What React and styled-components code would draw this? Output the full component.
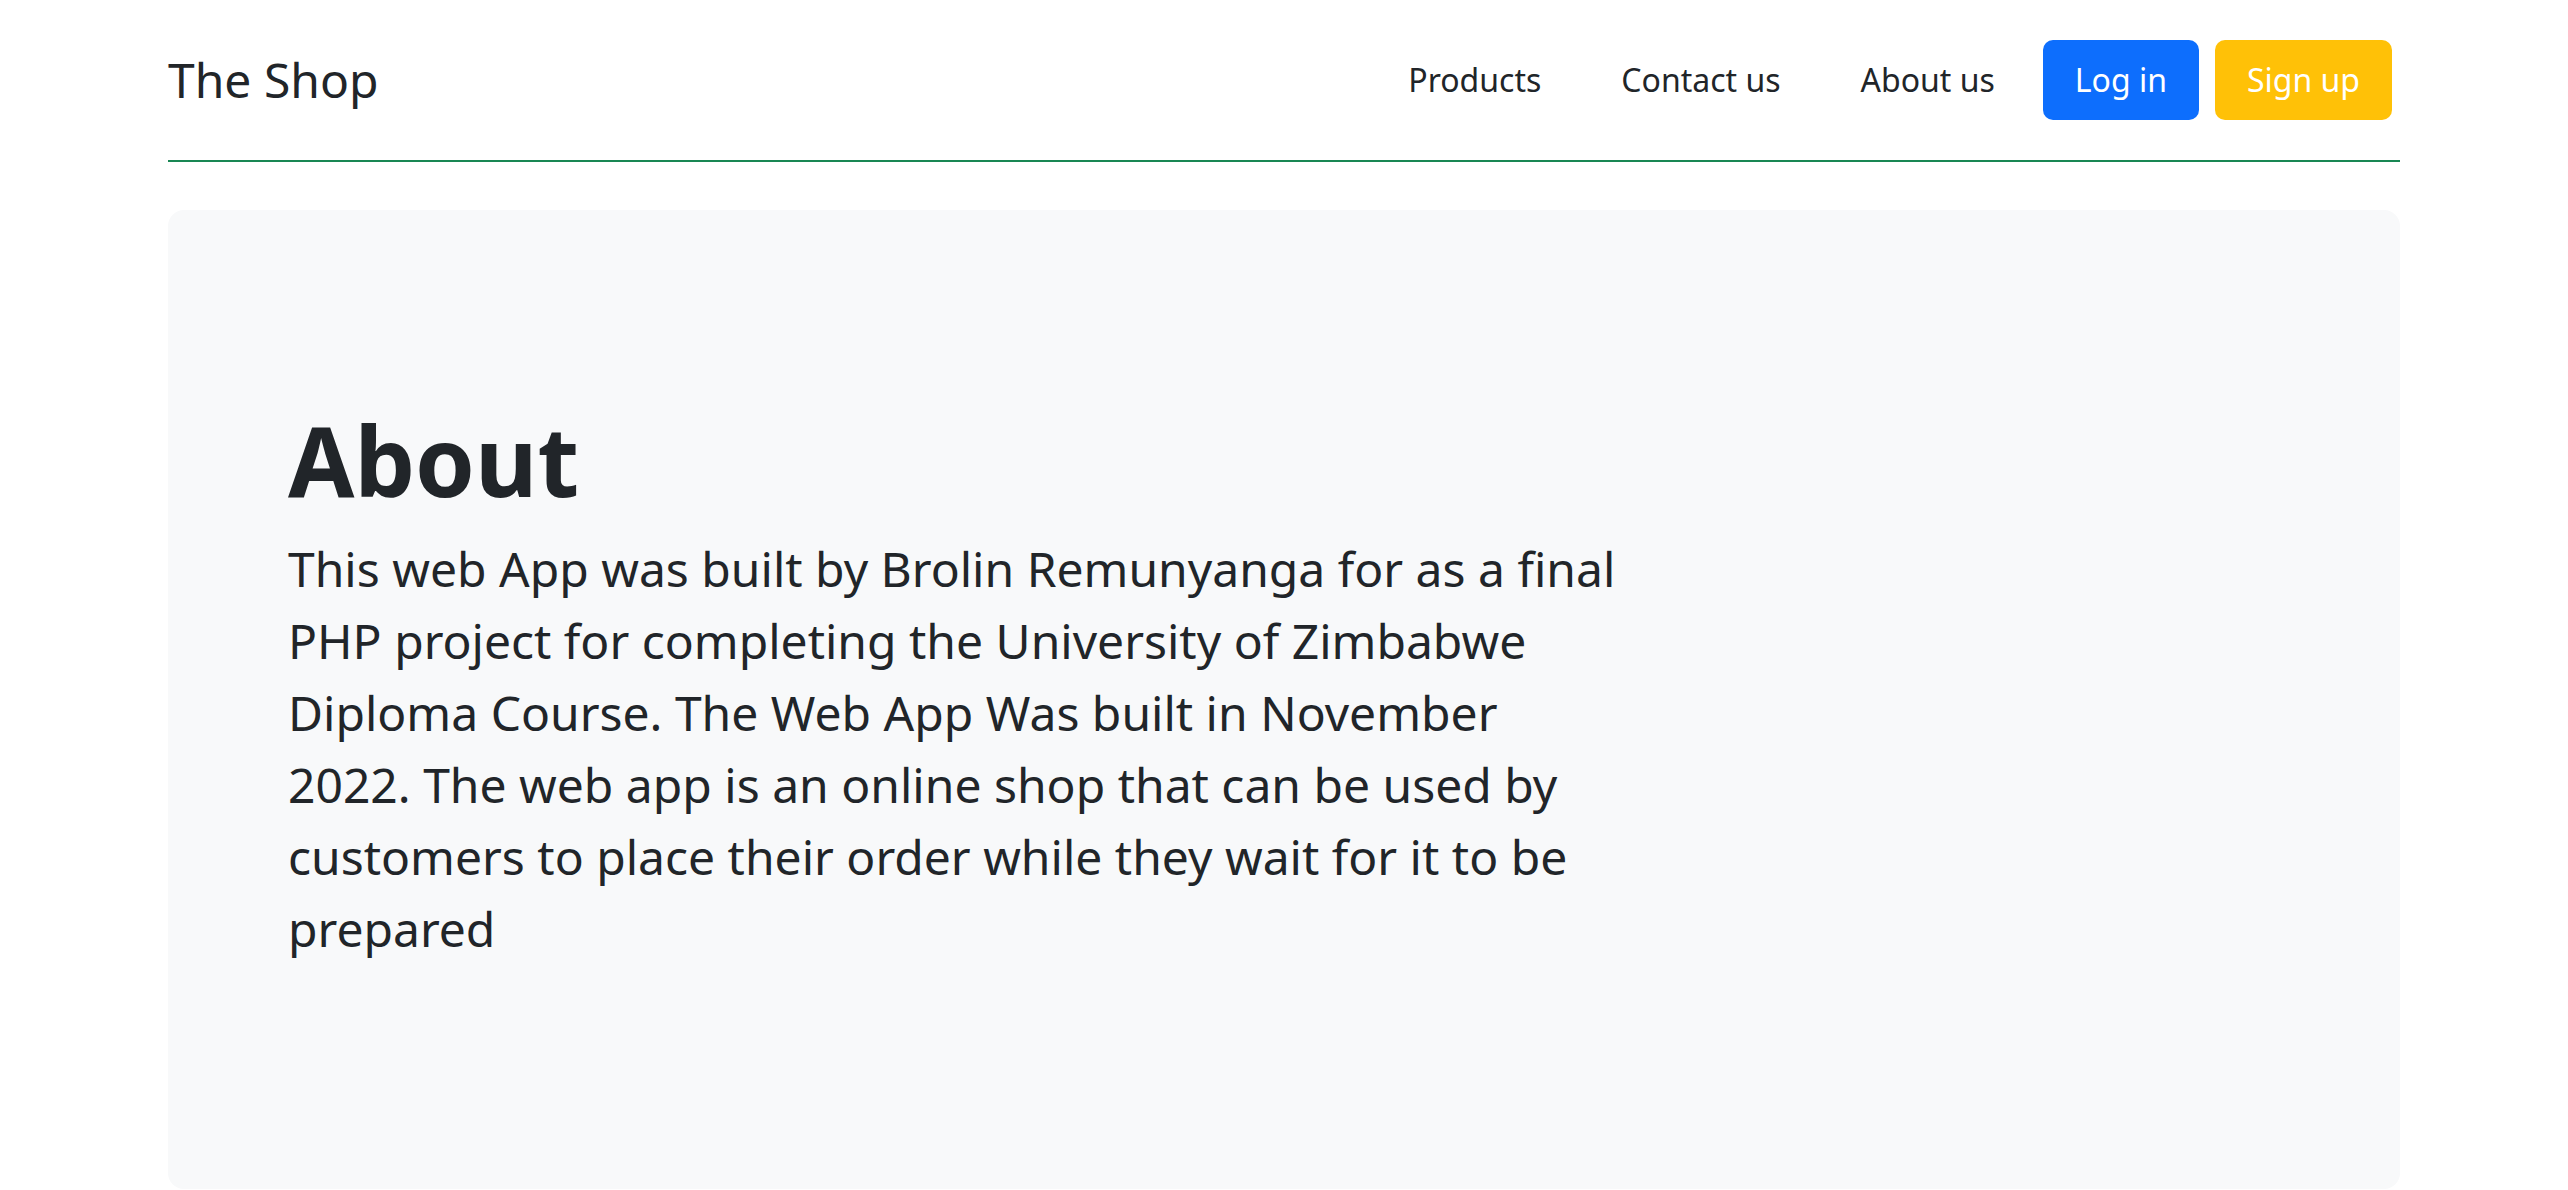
import React from "react";
import styled, { createGlobalStyle } from "styled-components";

const Global = createGlobalStyle`
  html, body { margin: 0; padding: 0; background: #fff; }
  body {
    font-family: "Noto Sans", "Open Sans", "Liberation Sans", sans-serif;
    color: #212529;
    -webkit-font-smoothing: antialiased;
  }
  * { box-sizing: border-box; }
`;

const Container = styled.div`
  width: 2232px;
  margin: 0 auto;
`;

const Header = styled.header`
  display: flex;
  align-items: center;
  justify-content: space-between;
  padding: 40px 0;
  border-bottom: 2px solid #198754;
  margin-bottom: 48px;
`;

const Brand = styled.a`
  font-size: 48px;
  line-height: 72px;
  color: #212529;
  text-decoration: none;
`;

const Nav = styled.nav`
  display: flex;
  align-items: center;
  gap: 16px;
  margin-right: 8px;
`;

const NavLink = styled.a`
  display: block;
  font-size: 32px;
  line-height: 48px;
  padding: 16px 32px;
  border-radius: 10px;
  text-decoration: none;
  color: ${(p) => (p.$bg ? "#fff" : "#212529")};
  background: ${(p) => p.$bg || "transparent"};
`;

const Jumbo = styled.section`
  background: #f8f9fa;
  border-radius: 16px;
  padding: 96px;
`;

const Inner = styled.div`
  padding: 96px 24px;
`;

const Title = styled.h1`
  margin: 0 0 16px;
  font-size: 96px;
  line-height: 1.2;
  font-weight: 700;
  color: #212529;
`;

const Lead = styled.p`
  width: 66.6667%;
  margin: 0 0 32px;
  font-size: 48px;
  line-height: 72px;
  color: #212529;
`;

export default function App() {
  return (
    <>
      <Global />
      <Container>
        <Header>
          <Brand href="#">The Shop</Brand>
          <Nav>
            <NavLink href="#">Products</NavLink>
            <NavLink href="#">Contact us</NavLink>
            <NavLink href="#">About us</NavLink>
            <NavLink href="#" $bg="#0d6efd">Log in</NavLink>
            <NavLink href="#" $bg="#ffc107">Sign up</NavLink>
          </Nav>
        </Header>
        <Jumbo>
          <Inner>
            <Title>About</Title>
            <Lead>
              This web App was built by Brolin Remunyanga for as a final PHP
              project for completing the University of Zimbabwe Diploma Course.
              The Web App Was built in November 2022. The web app is an online
              shop that can be used by customers to place their order while
              they wait for it to be prepared
            </Lead>
          </Inner>
        </Jumbo>
      </Container>
    </>
  );
}
